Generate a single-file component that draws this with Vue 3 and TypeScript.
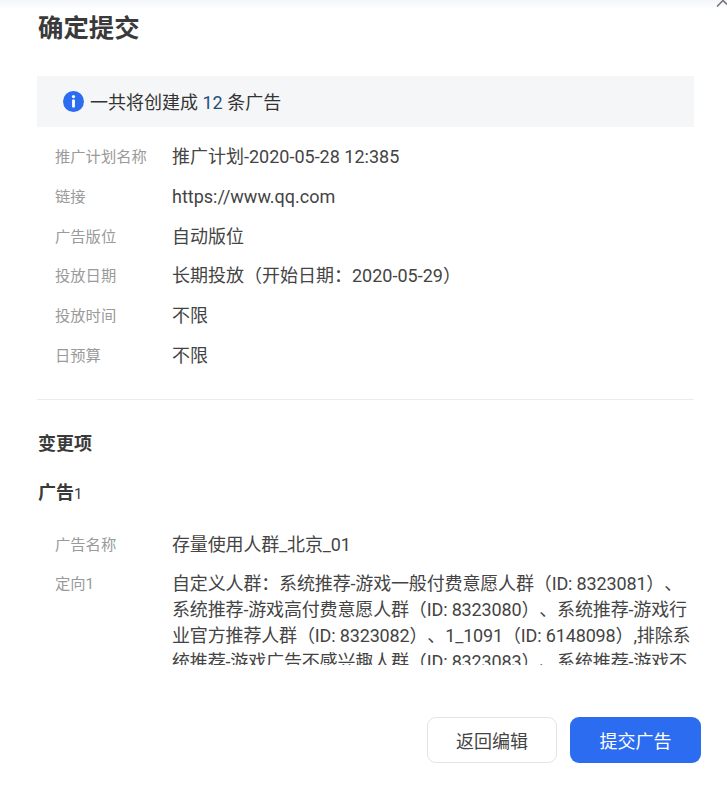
<script setup lang="ts">
interface Row { label: string; value: string }
const rows: Row[] = [
  { label: '推广计划名称', value: '推广计划-2020-05-28 12:385' },
  { label: '链接', value: 'https://www.qq.com' },
  { label: '广告版位', value: '自动版位' },
  { label: '投放日期', value: '长期投放（开始日期：2020-05-29）' },
  { label: '投放时间', value: '不限' },
  { label: '日预算', value: '不限' },
]
const adRows: Row[] = [
  { label: '广告名称', value: '存量使用人群_北京_01' },
  { label: '定向1', value: '自定义人群：系统推荐-游戏一般付费意愿人群（ID: 8323081）、系统推荐-游戏高付费意愿人群（ID: 8323080）、系统推荐-游戏行业官方推荐人群（ID: 8323082）、1_1091（ID: 6148098）,排除系统推荐-游戏广告不感兴趣人群（ID: 8323083）、系统推荐-游戏不活跃人群（ID: 8323084）' },
]
</script>

<template>
  <div class="dialog">
    <svg class="close" width="20" height="10" viewBox="0 0 20 10"><path d="M10 6.5 L16 0.5 L20 4.5" fill="none" stroke="#777" stroke-width="1.6"/></svg>
    <h2 class="title">确定提交</h2>
    <div class="body">
      <div class="notice">
        <svg class="info" width="21" height="21" viewBox="0 0 21 21">
          <circle cx="10.5" cy="10.5" r="10.5" fill="#2b6cf0"/>
          <circle cx="10.5" cy="5.6" r="1.6" fill="#fff"/>
          <rect x="9.1" y="8.6" width="2.8" height="7.8" rx="0.6" fill="#fff"/>
        </svg>
        <span class="notice-text">一共将创建成 <span class="num">12</span> 条广告</span>
      </div>
      <dl class="list">
        <div v-for="r in rows" :key="r.label" class="row">
          <dt>{{ r.label }}</dt>
          <dd>{{ r.value }}</dd>
        </div>
      </dl>
      <div class="divider"></div>
      <h3 class="section">变更项</h3>
      <h3 class="ad">广告<span class="ad-no">1</span></h3>
      <dl class="list ad-list">
        <div v-for="r in adRows" :key="r.label" class="row">
          <dt>{{ r.label }}</dt>
          <dd>{{ r.value }}</dd>
        </div>
      </dl>
    </div>
    <div class="footer">
      <button class="btn ghost">返回编辑</button>
      <button class="btn primary">提交广告</button>
    </div>
  </div>
</template>

<style>
html, body { margin: 0; background: #fff; }
</style>

<style scoped>
.dialog {
  position: relative;
  width: 727px;
  height: 797px;
  box-sizing: border-box;
  padding: 0 33px 0 37px;
  overflow: hidden;
  display: flex;
  flex-direction: column;
  color: #3a3a3a;
  font-family: Roboto, "Noto Sans CJK SC", sans-serif;
  text-spacing-trim: space-all;
  background: linear-gradient(#f3f5f9, #fff 9px);
}
.close { position: absolute; top: 0; right: 0; }
.title {
  margin: 0;
  height: 76px;
  box-sizing: border-box;
  padding: 12px 0 0 1px;
  font-size: 25.4px;
  line-height: 33px;
  font-weight: 700;
  color: #3a3a3a;
}
.body { height: 589px; overflow: hidden; }
.notice {
  height: 51px;
  background: #f5f6f8;
  display: flex;
  align-items: center;
  gap: 6px;
  padding-left: 26px;
  font-size: 18px;
  color: #333;
}
.notice-text { margin-top: -1px; }
.num { color: #1f4e7a; }
.list { margin: 0; padding: 17px 0 0 18px; }
.row { display: flex; margin-bottom: 13.1px; }
dt {
  width: 117px;
  flex: none;
  font-size: 15.3px;
  line-height: 25.7px;
  padding-top: 1px;
  color: #9a9a9a;
}
dd {
  margin: 0;
  flex: 1;
  font-size: 18px;
  line-height: 25.7px;
  color: #444;
  word-break: break-all;
}
.ad-list dd { letter-spacing: -0.15px; }
.divider { height: 1px; background: #ececf0; margin-top: 29px; }
.section, .ad {
  margin: 0;
  padding-left: 1px;
  font-size: 18px;
  line-height: 24px;
  font-weight: 700;
  color: #3a3a3a;
}
.section { padding-top: 32px; }
.ad { padding-top: 25px; }
.ad-no { font-size: 15px; font-weight: 400; }
.ad-list { padding-top: 26px; }
.footer {
  display: flex;
  justify-content: flex-end;
  gap: 13px;
  padding-top: 52px;
  margin-right: -7px;
}
.btn {
  width: 131px;
  height: 46px;
  box-sizing: border-box;
  border-radius: 9px;
  font-family: inherit;
  font-size: 18px;
  padding: 0;
}
.ghost { width: 130px; background: #fff; border: 1.5px solid #e3e4ea; color: #444; }
.primary { background: #2b6cf0; border: none; color: #fff; }
</style>
